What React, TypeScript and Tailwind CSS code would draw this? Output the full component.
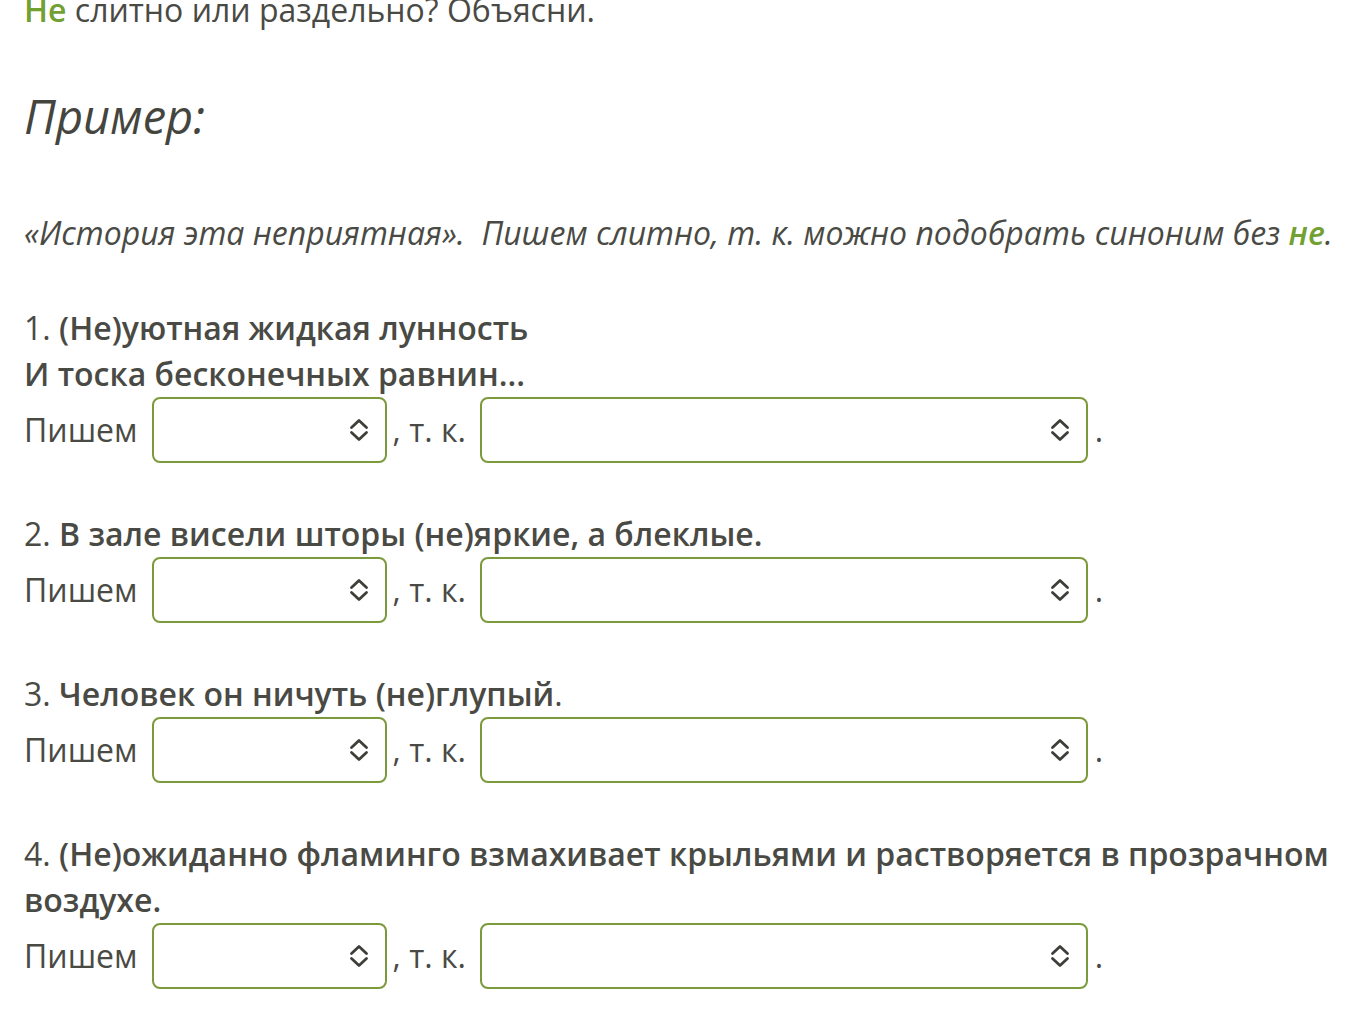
const items = [
  { n: 1, lines: ["(Не)уютная жидкая лунность", "И тоска бесконечных равнин..."], tail: "" },
  { n: 2, lines: ["В зале висели шторы (не)яркие, а блеклые."], tail: "" },
  { n: 3, lines: ["Человек он ничуть (не)глупый"], tail: "." },
  { n: 4, lines: ["(Не)ожиданно фламинго взмахивает крыльями и растворяется в прозрачном", "воздухе."], tail: "" },
];

function Chevrons() {
  return (
    <svg width="24" height="28" viewBox="0 0 24 28" fill="none" stroke="#3f3f3a" strokeWidth="2.8" strokeLinecap="round" strokeLinejoin="round">
      <path d="M4.5 11.5 L12 4.5 L19.5 11.5" />
      <path d="M4.5 16.5 L12 23.5 L19.5 16.5" />
    </svg>
  );
}

function Select({ wide }: { wide?: boolean }) {
  return (
    <div
      className={`flex h-[66px] items-center justify-end rounded-[8px] border-2 border-[#7b9a3c] bg-white pr-[14px] ${
        wide ? "w-[608px]" : "w-[235px]"
      }`}
    >
      <Chevrons />
    </div>
  );
}

export default function App() {
  return (
    <div
      className="min-h-screen overflow-hidden bg-white pl-[24px] text-[32px] leading-[46px] text-[#4a4a45]"
      style={{ fontFamily: '"Open Sans", "Noto Sans", sans-serif' }}
    >
      <p className="-mt-[13px]">
        <span className="font-semibold text-[#72a033]">Не</span> слитно или раздельно? Объясни.
      </p>

      <p className="mt-[55px] text-[47px] italic leading-[56px] text-[#44453e]">Пример:</p>

      <p className="mt-[66px] italic">
        «История эта неприятная».&nbsp; Пишем слитно, т. к. можно подобрать синоним без{" "}
        <span className="font-semibold text-[#72a033]">не</span>.
      </p>

      <div className="mt-[49px] flex flex-col gap-[48px]">
        {items.map((it) => (
          <div key={it.n}>
            {it.lines.map((l, i) => (
              <p key={i}>
                {i === 0 && <span>{it.n}. </span>}
                <span className="font-semibold">{l}</span>
                {i === it.lines.length - 1 && it.tail}
              </p>
            ))}
            <div className="flex items-center">
              <span className="mr-[14px]">Пишем</span>
              <Select />
              <span className="ml-[6px] mr-[14px]">, т. к.</span>
              <Select wide />
              <span className="ml-[7px]">.</span>
            </div>
          </div>
        ))}
      </div>
    </div>
  );
}
